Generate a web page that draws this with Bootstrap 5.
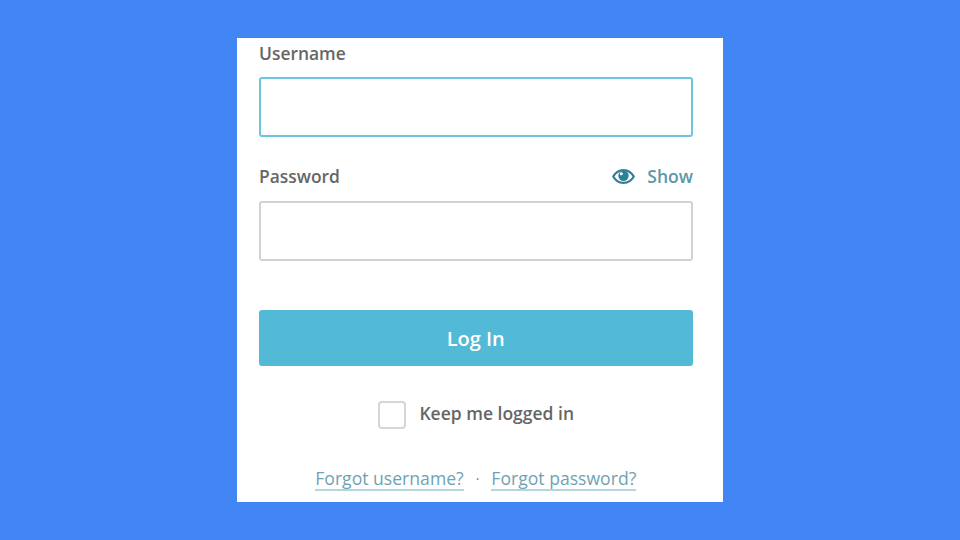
<!DOCTYPE html>
<html lang="en">
<head>
<meta charset="utf-8">
<title>Log in</title>
<link href="https://cdn.jsdelivr.net/npm/bootstrap@5.3.0/dist/css/bootstrap.min.css" rel="stylesheet">
<style>
html, body { height: 100%; }
body { background: #4285f4; font-family: "Open Sans", sans-serif; color: #5c5c5c; overflow: hidden; }
.stage { height: 540px; padding-top: 38px; }
.login-panel { width: 486px; height: 464px; background: #fff; padding: 0 30px 0 21.500px; }
.field-label { font-size: 17.400px; font-weight: 600; color: #666; line-height: 22px; margin: 0; }
.first-label { padding-top: 3.500px; margin-bottom: 13.500px; padding-left: .5px; }
.pw-head { margin-top: 28px; margin-bottom: 14px; padding-left: .5px; }
.login-panel .form-control { height: 60px; border-radius: 3px; border: 2px solid #d2d2d2; background: #fff; box-shadow: none; }
.login-panel .form-control.active-field { border-color: #6cc6dd; }
.show-link { font-size: 17.500px; font-weight: 600; color: #5d97a6; line-height: 22px; gap: 12px; text-decoration: none; }
.login-btn { height: 56px; margin-top: 49px; background: #52b9d6; border: 0; border-radius: 3px; color: #fff; font-size: 20px; font-weight: 600; padding-top: 8px; }
.login-btn:hover { background: #52b9d6; color: #fff; }
.keep-row { margin-top: 35px; gap: 13px; padding-left: 1px; }
.keep-row .form-check-input { width: 28px; height: 28px; margin: 0; border: 2px solid #d6d6d6; border-radius: 4px; float: none; box-shadow: none; }
.keep-row label { font-size: 17.500px; font-weight: 600; color: #666; line-height: 24px; margin-top: -4px; }
.forgot-row { margin-top: 37px; font-size: 17.600px; line-height: 24px; color: #6fa3b2; gap: 12px; }
.forgot-row a { color: #6fa3b2; text-decoration: none; border-bottom: 2px solid #b5d6df; display: block; line-height: 21px; padding-top: 2px; }
.dot-sep { font-size: 14px; color: #5b8793; }
</style>
</head>
<body>
<div class="stage d-flex justify-content-center align-items-start">
  <form class="login-panel d-flex flex-column">
    <label class="field-label first-label" for="u">Username</label>
    <input class="form-control active-field" id="u" type="text">
    <div class="pw-head d-flex justify-content-between align-items-center">
      <label class="field-label" for="p">Password</label>
      <a href="#" class="show-link d-flex align-items-center">
        <svg width="23" height="15" viewBox="0 0 23 15" aria-hidden="true"><path fill="#2f8097" fill-rule="evenodd" d="M11.500 0C6.500 0 2.300 3 0 7.500C2.300 12 6.500 15 11.500 15S20.700 12 23 7.500C20.700 3 16.500 0 11.500 0zM11.500 2.200C15.300 2.200 18.500 4.200 20.500 7.500C18.500 10.800 15.300 12.800 11.500 12.800S4.500 10.800 2.500 7.500C4.500 4.200 7.700 2.200 11.500 2.200z"/><circle cx="11.500" cy="6.800" r="5.200" fill="#2f8097"/><circle cx="9.300" cy="4.800" r="1.500" fill="#fff"/></svg>
        <span>Show</span>
      </a>
    </div>
    <input class="form-control" id="p" type="password">
    <button type="button" class="btn login-btn w-100">Log In</button>
    <div class="keep-row d-flex justify-content-center align-items-center">
      <input class="form-check-input" type="checkbox" id="k">
      <label for="k">Keep me logged in</label>
    </div>
    <div class="forgot-row d-flex justify-content-center align-items-center">
      <a href="#">Forgot username?</a>
      <span class="dot-sep">·</span>
      <a href="#">Forgot password?</a>
    </div>
  </form>
</div>
<script src="https://cdn.jsdelivr.net/npm/bootstrap@5.3.0/dist/js/bootstrap.bundle.min.js"></script>
</body>
</html>
